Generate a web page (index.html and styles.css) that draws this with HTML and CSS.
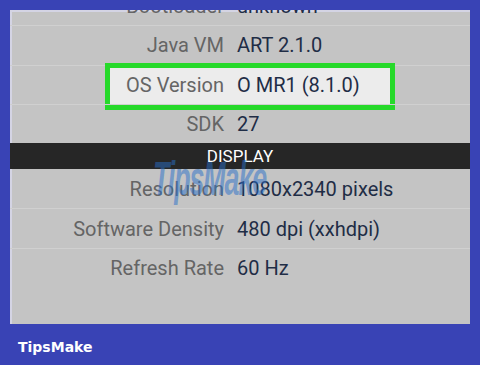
FILE: index.html
```html
<!DOCTYPE html>
<html>
<head>
<meta charset="utf-8">
<link rel="stylesheet" href="styles.css">
</head>
<body>
<div class="frame">
  <div class="panel">
    <div class="rows">
      <div class="row first"><span class="label">Bootloader</span><span class="value">unknown</span></div>
      <div class="row"><span class="label">Java VM</span><span class="value">ART 2.1.0</span></div>
      <div class="row highlight"><div class="hl"></div><span class="label">OS Version</span><span class="value">O MR1 (8.1.0)</span></div>
      <div class="row"><span class="label">SDK</span><span class="value">27</span></div>
      <div class="section">DISPLAY</div>
      <div class="row nb"><span class="label">Resolution</span><span class="value">1080x2340 pixels</span></div>
      <div class="row"><span class="label">Software Density</span><span class="value">480 dpi (xxhdpi)</span></div>
      <div class="row"><span class="label">Refresh Rate</span><span class="value">60 Hz</span></div>
    </div>
    <div class="watermark">TipsMake</div>
  </div>
  <div class="brand">TipsMake</div>
</div>
</body>
</html>
```
FILE: styles.css
```css
html, body {
  margin: 0;
  padding: 0;
}
body {
  background: #3943b5;
  width: 480px;
  height: 365px;
  overflow: hidden;
  font-family: Roboto, "Liberation Sans", sans-serif;
}
.frame {
  padding: 10px 10px 0 10px;
}
.panel {
  position: relative;
  height: 314px;
  background: #c4c4c4;
  box-shadow: inset 2px 2px 0 #d4d4e4;
  overflow: hidden;
}
.rows {
  display: flex;
  flex-direction: column;
}
.row {
  position: relative;
  display: flex;
  align-items: center;
  gap: 13px;
  height: 39.3px;
  box-sizing: border-box;
  border-top: 1px solid #d0d0d0;
  font-size: 20px;
}
.row.first {
  margin-top: -24px;
  border-top: none;
}
.row.nb {
  border-top: none;
}
.label {
  position: relative;
  z-index: 1;
  width: 214px;
  text-align: right;
  color: #656565;
}
.value {
  position: relative;
  z-index: 1;
  color: #1f2d46;
}
.hl {
  position: absolute;
  left: 95px;
  top: -3px;
  width: 290px;
  height: 47px;
  box-sizing: border-box;
  border: 5px solid #26d92a;
  background: #ececec;
}
.section {
  height: 26px;
  background: #262626;
  color: #ffffff;
  font-size: 17px;
  display: flex;
  align-items: center;
  justify-content: center;
}
.watermark {
  position: absolute;
  z-index: 2;
  left: 143px;
  top: 141px;
  font-family: "Liberation Sans", sans-serif;
  font-weight: bold;
  font-style: italic;
  font-size: 48px;
  letter-spacing: -2px;
  color: rgba(40, 110, 200, 0.5);
  transform: scaleX(0.56);
  transform-origin: left top;
}
.brand {
  padding: 15px 0 0 8px;
  font-family: "DejaVu Sans", sans-serif;
  font-weight: bold;
  font-size: 14px;
  color: #ffffff;
}
```
